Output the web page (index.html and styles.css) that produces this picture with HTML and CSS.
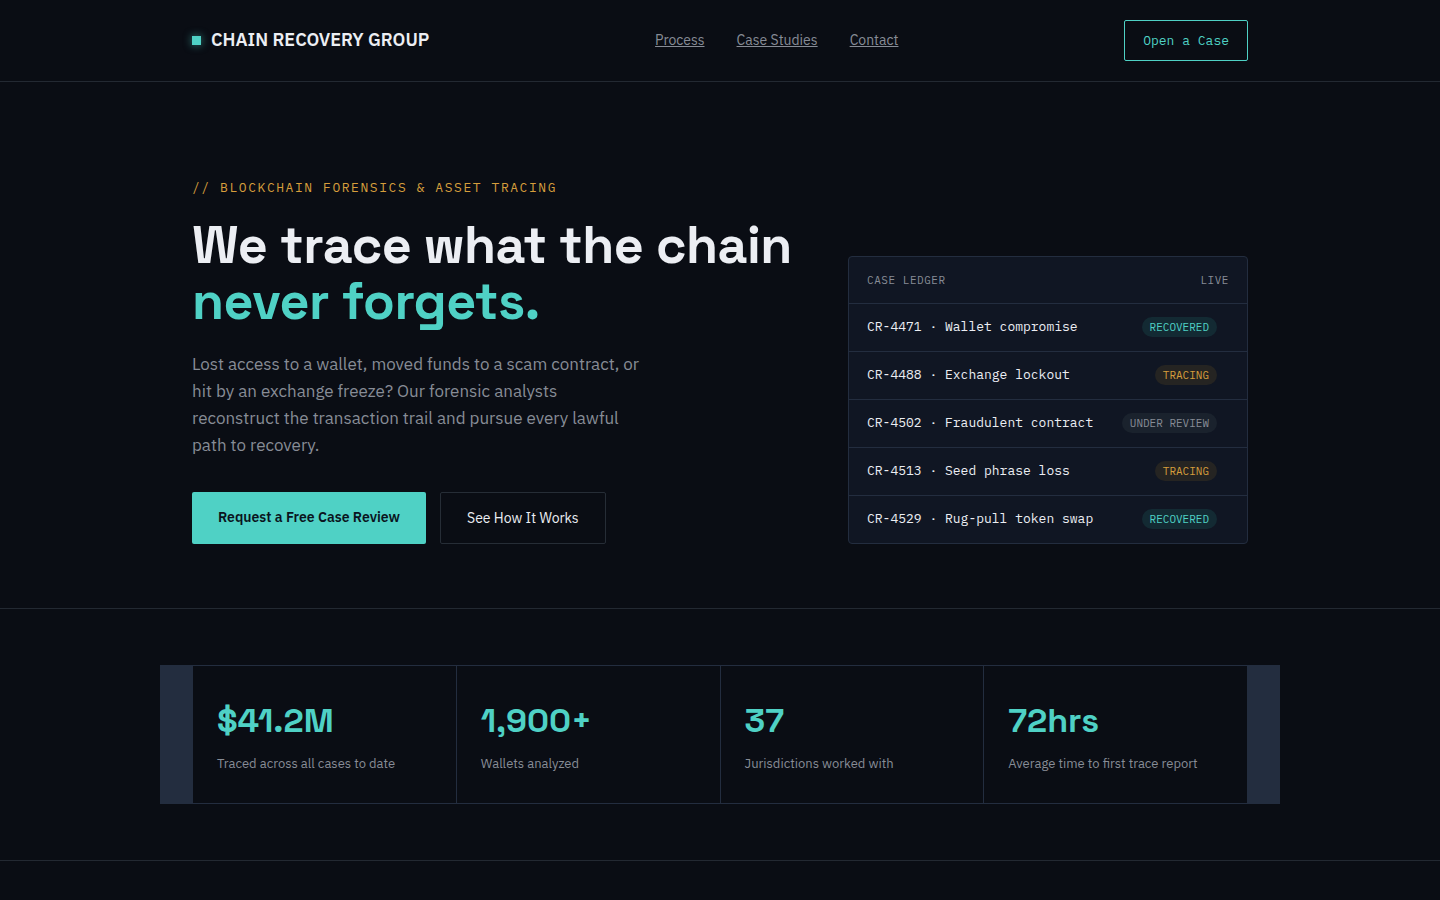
FILE: index.html
```html
<!DOCTYPE html>
<html lang="en">
<head>
<meta charset="utf-8">
<meta name="viewport" content="width=device-width, initial-scale=1">
<title>Chain Recovery Group</title>
<link rel="stylesheet" href="styles.css">
</head>
<body>
<header class="site-header">
  <div class="wrap header-inner">
    <div class="brand"><span class="brand-mark"></span>CHAIN RECOVERY GROUP</div>
    <nav class="nav">
      <a href="#process">Process</a>
      <a href="#cases">Case Studies</a>
      <a href="#contact">Contact</a>
    </nav>
    <button class="btn-case" type="button">Open a Case</button>
  </div>
</header>
<main>
  <section class="hero">
    <div class="wrap hero-grid">
      <div class="hero-copy">
        <p class="eyebrow">// BLOCKCHAIN FORENSICS &amp; ASSET TRACING</p>
        <h1>We trace what the chain<br><span class="accent">never forgets.</span></h1>
        <p class="lede">Lost access to a wallet, moved funds to a scam contract, or hit by an exchange freeze? Our forensic analysts reconstruct the transaction trail and pursue every lawful path to recovery.</p>
        <div class="actions">
          <a class="btn btn-primary" href="#review">Request a Free Case Review</a>
          <a class="btn btn-ghost" href="#process">See How It Works</a>
        </div>
      </div>
      <div class="ledger">
        <table>
          <thead>
            <tr><th scope="col">CASE LEDGER</th><th scope="col">LIVE</th></tr>
          </thead>
          <tbody>
            <tr><td>CR-4471 · Wallet compromise</td><td><span class="badge recovered">RECOVERED</span></td></tr>
            <tr><td>CR-4488 · Exchange lockout</td><td><span class="badge tracing">TRACING</span></td></tr>
            <tr><td>CR-4502 · Fraudulent contract</td><td><span class="badge review">UNDER REVIEW</span></td></tr>
            <tr><td>CR-4513 · Seed phrase loss</td><td><span class="badge tracing">TRACING</span></td></tr>
            <tr><td>CR-4529 · Rug-pull token swap</td><td><span class="badge recovered">RECOVERED</span></td></tr>
          </tbody>
        </table>
      </div>
    </div>
  </section>
  <section class="stats-section">
    <div class="wrap stats">
      <div class="stat"><div class="stat-value">$41.2M</div><div class="stat-label">Traced across all cases to date</div></div>
      <div class="stat"><div class="stat-value">1,900+</div><div class="stat-label">Wallets analyzed</div></div>
      <div class="stat"><div class="stat-value">37</div><div class="stat-label">Jurisdictions worked with</div></div>
      <div class="stat"><div class="stat-value">72hrs</div><div class="stat-label">Average time to first trace report</div></div>
    </div>
  </section>
</main>
</body>
</html>
```
FILE: styles.css
```css
:root {
  --bg: #0a0d14;
  --panel: #101623;
  --line: #232d3f;
  --rule: #232932;
  --text: #eceef3;
  --muted: #878c96;
  --teal: #4fd1c5;
  --amber: #d69e3c;
  --sans: "IBM Plex Sans", Roboto, "Liberation Sans", sans-serif;
  --display: "Space Grotesk", Inter, sans-serif;
  --mono: "IBM Plex Mono", "Liberation Mono", monospace;
}
* { box-sizing: border-box; }
body {
  margin: 0;
  background: var(--bg);
  color: var(--text);
  font-family: var(--sans);
  line-height: 1.6;
}
h1, p { margin: 0; }
button { cursor: pointer; }
.wrap {
  max-width: 1120px;
  margin: 0 auto;
  padding: 0 32px;
}
.site-header { border-bottom: 1px solid var(--rule); }
.header-inner {
  display: flex;
  align-items: center;
  justify-content: space-between;
  padding-top: 20px;
  padding-bottom: 20px;
}
.brand {
  display: flex;
  align-items: center;
  gap: 10px;
  font-size: 18px;
  font-weight: 600;
}
.brand-mark {
  width: 9px;
  height: 9px;
  background: var(--teal);
  box-shadow: 0 0 8px rgba(79, 209, 197, 0.6);
}
.nav { display: flex; gap: 32px; }
.nav a {
  color: var(--muted);
  font-size: 14px;
}
.btn-case {
  padding: 12px 18px;
  border: 1px solid var(--teal);
  border-radius: 2px;
  background: transparent;
  color: var(--teal);
  font: 13px/15px var(--mono);
}
.hero {
  padding: 96px 0 64px;
  border-bottom: 1px solid var(--rule);
}
.hero-grid {
  display: grid;
  grid-template-columns: minmax(0, 1fr) 400px;
  gap: 48px;
  align-items: end;
}
.eyebrow {
  color: var(--amber);
  font: 13px/20px var(--mono);
  letter-spacing: 0.12em;
}
h1 {
  margin-top: 19px;
  font: 600 52px/56px var(--display);
  letter-spacing: -0.01em;
}
.accent { color: var(--teal); }
.lede {
  max-width: 450px;
  margin-top: 22px;
  color: var(--muted);
  font-size: 17px;
  line-height: 27px;
}
.actions { display: flex; gap: 14px; margin-top: 33px; }
.btn {
  padding: 16px 26px;
  border-radius: 2px;
  font: 14px/18px var(--sans);
  text-decoration: none;
}
.btn-primary {
  background: var(--teal);
  color: #0a1420;
  font-weight: 600;
}
.btn-ghost {
  border: 1px solid #262d36;
  color: var(--text);
}
.ledger {
  overflow: hidden;
  border: 1px solid var(--line);
  border-radius: 4px;
  background: var(--panel);
}
.ledger table {
  width: 100%;
  border-spacing: 0;
  font-family: var(--mono);
  white-space: nowrap;
}
.ledger th, .ledger td { height: 48px; padding: 0 0 0 18px; text-align: left; }
.ledger th {
  height: 46px;
  padding-top: 2px;
  color: var(--muted);
  font-size: 11px;
  font-weight: 400;
  letter-spacing: 0.05em;
}
.ledger td {
  border-top: 1px solid var(--line);
  font-size: 13px;
}
.ledger th:last-child, .ledger td:last-child { text-align: right; }
.ledger th:last-child { padding-right: 18px; }
.ledger td:last-child { padding-right: 30px; }
.badge {
  display: inline-block;
  padding: 0 8px;
  border-radius: 10px;
  font-size: 11px;
  line-height: 20px;
}
.recovered { background: #132a33; color: var(--teal); }
.tracing { background: #252422; color: var(--amber); }
.review { background: #1a222d; color: var(--muted); }
.stats-section {
  padding: 56px 0;
  border-bottom: 1px solid var(--rule);
}
.stats {
  display: grid;
  grid-template-columns: repeat(4, minmax(0, 1fr));
  gap: 1px;
  border: 1px solid var(--line);
  background: var(--line);
}
.stat { padding: 28px 24px; background: var(--bg); }
.stat-value {
  color: var(--teal);
  font: 600 34px/54px var(--display);
}
.stat-label {
  margin-top: 4px;
  color: var(--muted);
  font-size: 13px;
  line-height: 23px;
}
```
